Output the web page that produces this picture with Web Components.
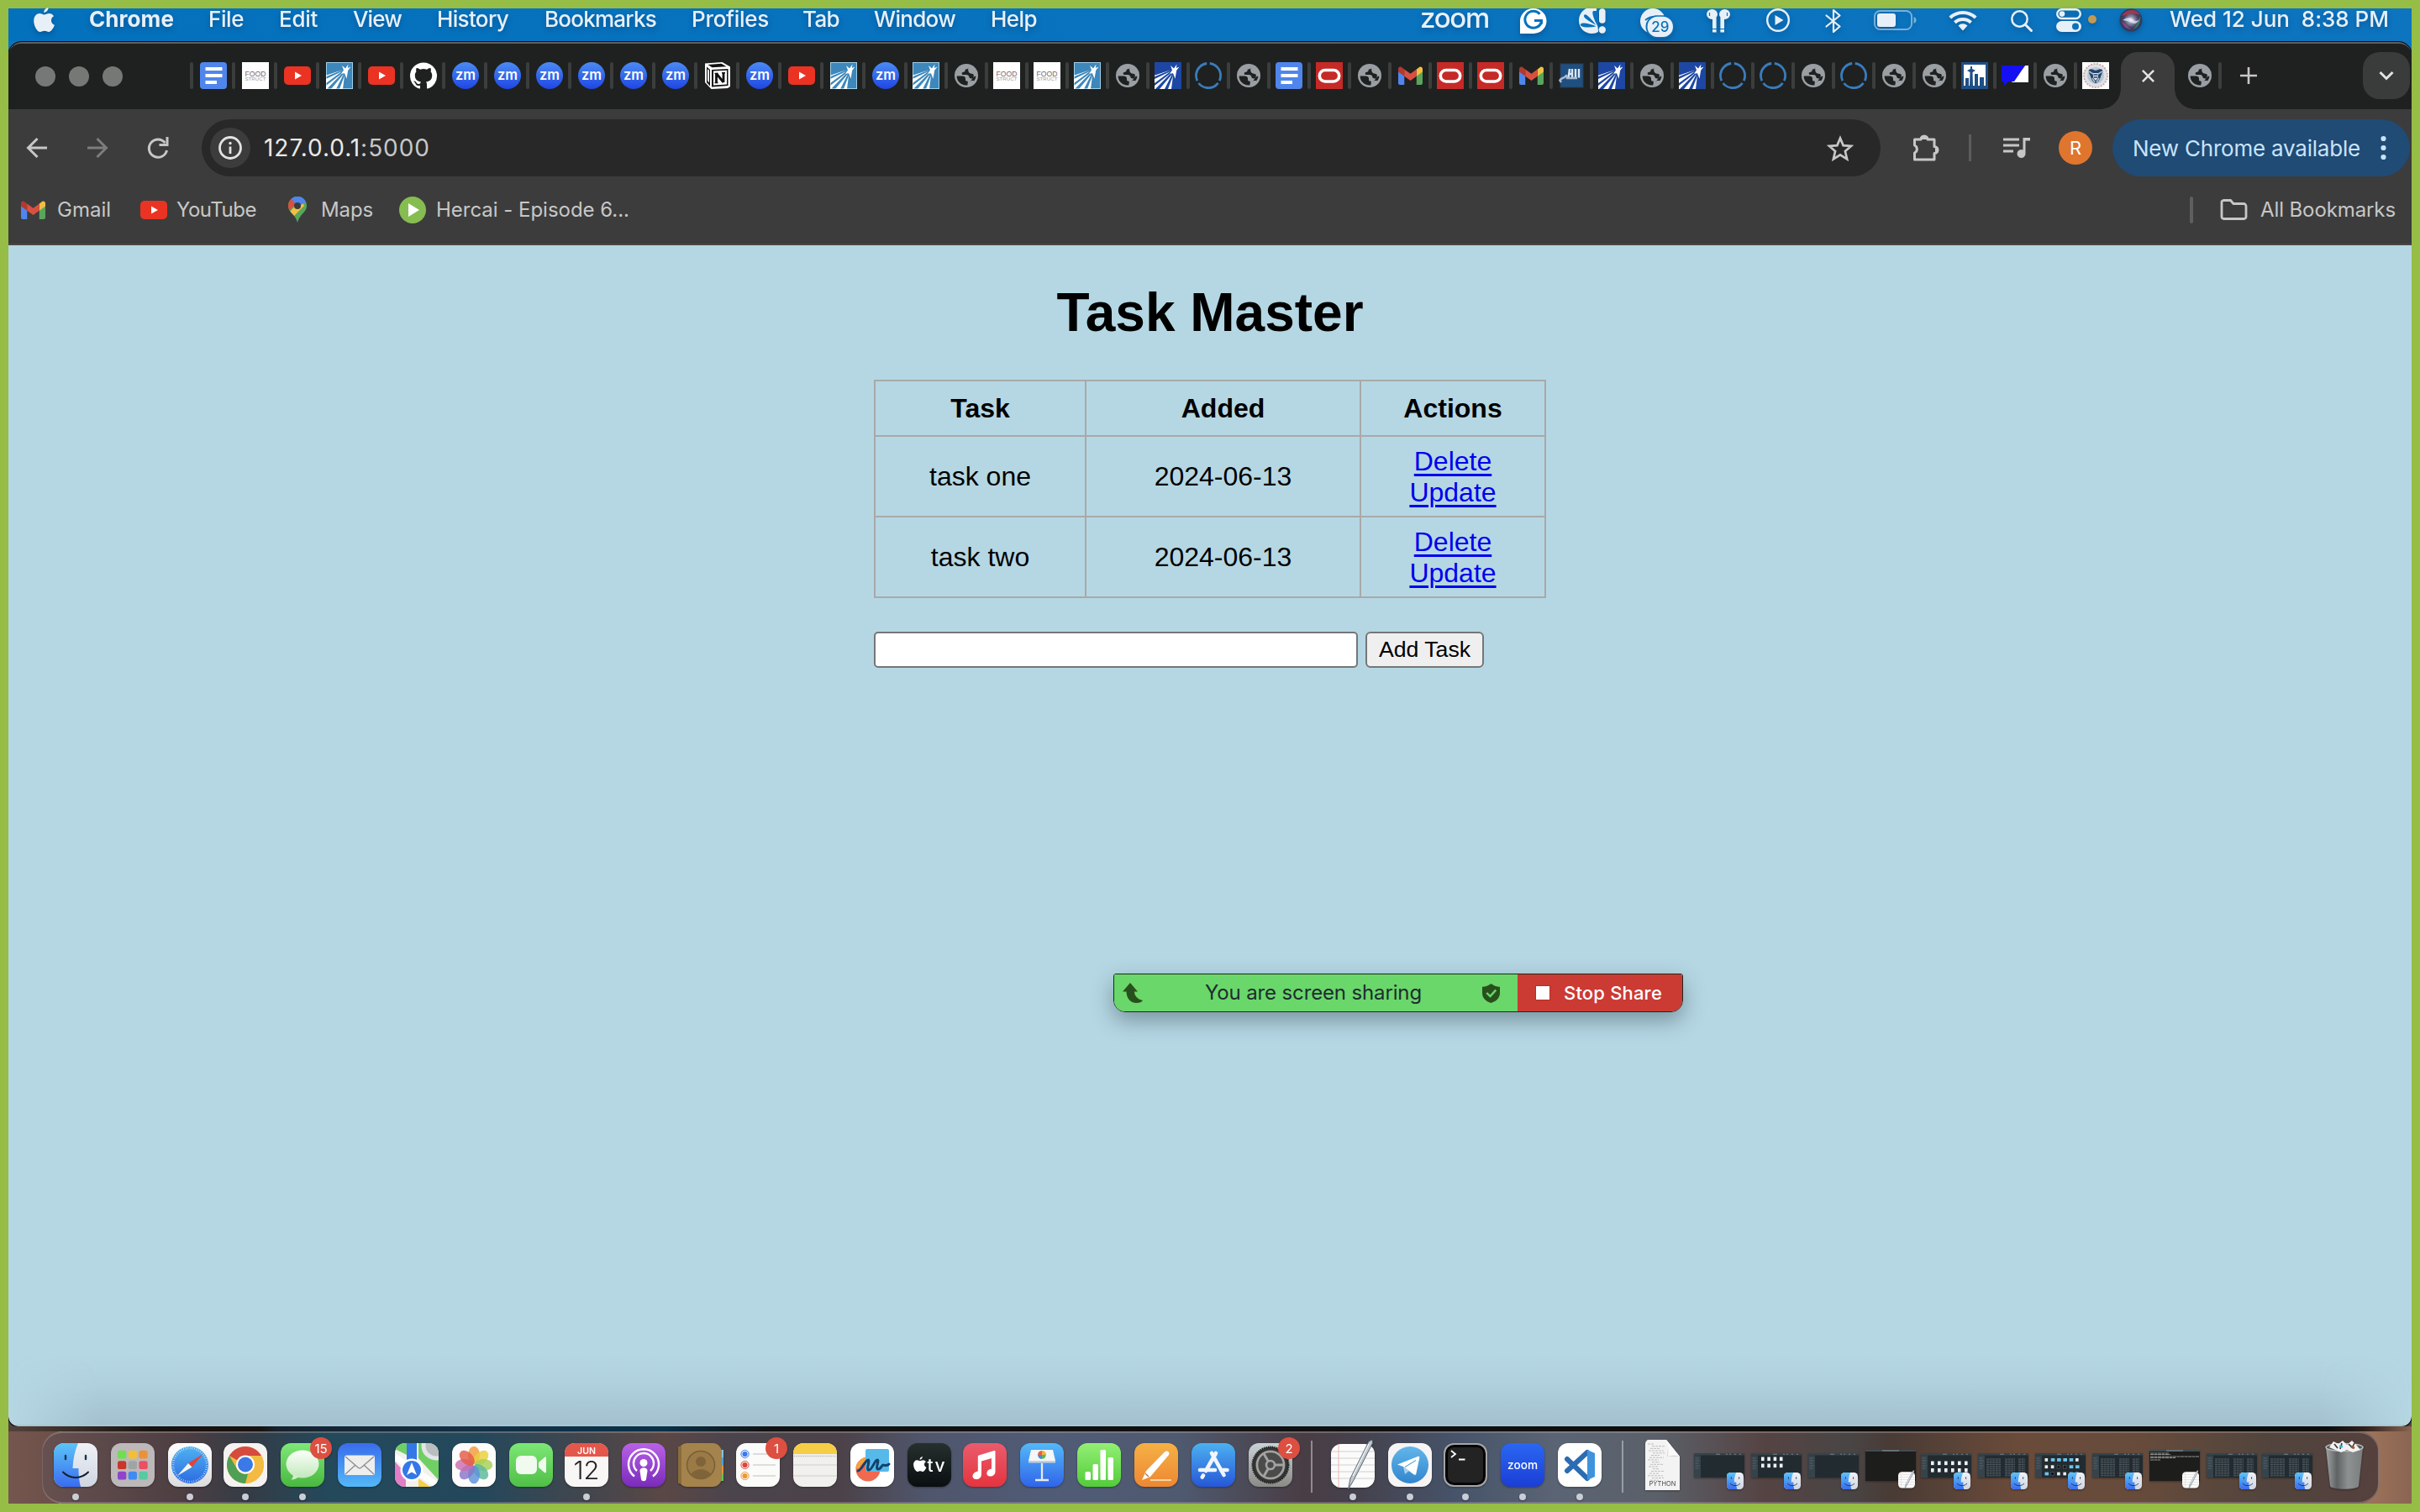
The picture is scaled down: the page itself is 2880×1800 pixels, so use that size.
<!DOCTYPE html>
<html lang="en">
<head>
<meta charset="utf-8">
<title>Task Master</title>
<style>
html,body{margin:0;padding:0;width:2880px;height:1800px;overflow:hidden;background:#96bd46;font-family:Inter,"Liberation Sans",sans-serif}
</style>
</head>
<body>
<desktop-screen></desktop-screen>
<script>
/* ---------- drawings ---------- */
const tile = (fill, inner, defs = '') => ['0 0 52 52', `<defs>${defs}</defs><rect width="52" height="52" rx="12" fill="${fill}"/>${inner}`];
const vgrad = (id, a, b) => `<linearGradient id="${id}" x1="0" y1="0" x2="0" y2="1"><stop stop-color="${a}"/><stop offset="1" stop-color="${b}"/></linearGradient>`;
const star = (bg, edge) => ['0 0 32 32', `<rect width="32" height="32" fill="${bg}"/><rect x=".5" y=".5" width="31" height="31" fill="none" stroke="${edge}"/>
<path fill="#fff" d="M26.500 2.500 25.800 7l3.700-1.500-3.300 4.300-1.700 10-2.500-6.500-4 .5 3-4.300-2-5.500 4 3.500zM20 9 0 17.300v-1.600zM19 11 0 25v-5zM20 12.500 1 32H0v-4zM21 14 12 32H6zM22 16l-2 16h-4z"/>`];
const FINDER = `<defs>${vgrad('a','#5cc4f7','#3a6cf0')}${vgrad('b','#eff1f6','#cfd6e2')}<clipPath id="c"><rect width="52" height="52" rx="12"/></clipPath></defs>
<g clip-path="url(#c)"><rect width="52" height="52" fill="url(#b)"/><path fill="url(#a)" d="M0 0h29c-4 9-6 19-6.500 30h7c0 8 .5 15 2.500 22H0z"/></g>
<path d="M14 15v4M38 15v4" stroke="#18344e" stroke-width="2.400" stroke-linecap="round"/><path d="M11 34.500c8 8.500 22 8.500 30 0" fill="none" stroke="#14202c" stroke-width="2" stroke-linecap="round"/>`;
const APPLE = `<path fill="currentColor" d="M17.500 0c.3 2.600-2.500 6-5.300 5.900C11.900 3.300 14.700.2 17.500 0zM24 10.200c-4.500 2.600-3.800 8.700.9 10.500-1.300 3.900-4.300 8.300-6.900 8.300-1.800 0-2.800-1.200-5-1.200S9.600 29 7.900 29C4.300 29 .2 21.800.2 15.900.2 10 3.700 7 7.200 7c2.200 0 4 1.400 5.400 1.400C13.900 8.400 16 7 18.700 7c2 0 4 1.100 5.300 3.200z"/>`;
const GMAIL = ['0 0 28 22', `<path fill="#5086ec" d="M0 3v17a2 2 0 0 0 2 2h5V9z"/><path fill="#58a55c" d="M28 3v17a2 2 0 0 1-2 2h-5V9z"/><path fill="#f1bf42" d="M21 3.500 24.500.8C26 0 28 1 28 3v3.500l-7 5.200z"/><path fill="#b03a2f" d="M7 3.500 3.500.8C2 0 0 1 0 3v3.500l7 5.200z"/><path fill="#d95040" d="M7 3.500v8.200l7 5.300 7-5.300V3.500l-7 5.300z"/>`];
const YT = ['0 0 32 22', `<rect width="32" height="22" rx="5" fill="#ea3323"/><path fill="#fff" d="m13 6.500 8 4.500-8 4.500z"/>`];
const windowThumb = kind => {
  let body = '';
  if (kind === 'files' || kind === 'files2') {
    for (let r = 0; r < 2; r++) for (let c = 0; c < (kind === 'files' ? 4 : 6); c++)
      body += `<rect x="${12 + c * (kind === 'files' ? 7.300 : 8)}" y="${kind === 'files' ? 4.500 + r * 8 : 9.500 + r * 8.500}" width="3.600" height="4.600" fill="#eef2f4"/>`;
  } else if (kind === 'folders') {
    const p = ['w','b','b','b','b','w','w','w','k','k','b','b','b','k','w','w','b','w'];
    p.forEach((k, i) => body += `<rect x="${11.500 + (i % 6) * 7.300}" y="${6 + Math.floor(i / 6) * 8.300}" width="${k === 'b' ? 4.600 : 3.600}" height="3.800" fill="${k === 'b' ? '#6cc3ee' : k === 'w' ? '#e8eef0' : '#11161a'}" stroke="#778086" stroke-width="${k === 'k' ? .4 : 0}"/>`);
  } else if (kind === 'list') {
    for (let i = 0; i < 10; i++) body += `<path d="M10 ${7 + i * 2.200}h17M32 ${7 + i * 2.200}h12M48 ${7 + i * 2.200}h8" stroke="#66727a" stroke-width=".8" stroke-dasharray="3 .6"/>`;
  }
  return ['0 0 60 29', `<rect width="60" height="29" fill="#222b30"/><rect width="60" height="2.500" fill="#37434a"/><path d="M26 1.200h5M38 1.200h2M42 1.200h2M48 1.200h2M54 1.200h2" stroke="#8a949a" stroke-width=".8"/><rect y="2.500" width="8" height="26.500" fill="#36434b"/><path d="M1.500 6h4M1.500 9h5M1.500 12h4M1.500 15h5M1.500 18h4" stroke="#5f6d75" stroke-width=".8"/>${body}`];
};
const ICONS = {
  apple: ['0 0 25 29', APPLE],
  grammarly: ['0 0 32 30', `<path fill="#fff" d="M16 0a15.500 15 0 1 1 0 30H0V14.500A15.800 15 0 0 1 16 0z"/><path d="M23.500 6.800a10 10 0 1 0 2 9.200" fill="none" stroke="#0a72bd" stroke-width="3"/><path d="M17 14.500h8.500v4" fill="none" stroke="#0a72bd" stroke-width="3"/>`],
  avast: ['0 0 32 30', `<path fill="#e8f0f7" d="M21 0H9C3.500 2.500 0 8 0 14.500c0 9 7 15.500 15.500 15.500 3 0 5.500-.8 7.500-2z"/><path fill="#0a72bd" d="M23 0v22c-2-3-5-9-6-13s-1-6 1-6 3 1 5-3zM20.500 20C15 17 8 13 6.500 10.500S7 6 9.500 8 17 15 20.500 20zM20.500 21.500C14 23 6 23 3 21s0-4 4-3.500 10 2 13.500 4z"/><path d="M27.800 4v10" stroke="#e8f0f7" stroke-width="7.600" stroke-linecap="round"/><circle cx="27.800" cy="25.500" r="4.200" fill="#e8f0f7"/>`],
  cloud: ['0 0 40 34', `<circle cx="16" cy="15" r="15" fill="#e8f0f7"/><path d="M7 14c5-4 11-5 18-3.500" stroke="#0a72bd" stroke-width="2" fill="none"/><rect x="7.500" y="8.200" width="34" height="27" rx="13.500" fill="#0a72bd"/><rect x="9.500" y="9.800" width="30.500" height="24.200" rx="12.100" fill="#e8f0f7"/><text x="24.800" y="28" text-anchor="middle" font-size="17" font-weight="500" font-family="Inter" fill="#0a72bd">29</text>`],
  airpods: ['0 0 28 28', `<g fill="#e8f0f7"><ellipse cx="6.500" cy="6" rx="6.500" ry="6"/><ellipse cx="21.500" cy="6" rx="6.500" ry="6"/><rect x="7" y="10" width="4.600" height="13"/><rect x="16.400" y="10" width="4.600" height="13"/><rect x="7" y="24" width="4.600" height="3.500"/><rect x="16.400" y="24" width="4.600" height="3.500"/></g><path d="M3.500 4v4M24.500 4v4" stroke="#0a72bd" stroke-width="1.200"/>`],
  play: ['0 0 28 28', `<circle cx="14" cy="14" r="12.800" fill="none" stroke="#e8f0f7" stroke-width="2.400"/><path fill="#e8f0f7" d="m10.500 8 10 6-10 6z"/>`],
  bluetooth: ['0 0 20 30', `<path d="m1.500 8.500 16 13L10 28V2l7.500 6.500-16 13" fill="none" stroke="#e8f0f7" stroke-width="2.200" stroke-linejoin="round" stroke-linecap="round"/>`],
  battery: ['0 0 51 24', `<rect x="1" y="1" width="44" height="22" rx="6.500" fill="none" stroke="#e8f0f7" stroke-opacity=".5" stroke-width="2"/><rect x="4" y="4" width="22" height="16" rx="3" fill="#e8f0f7"/><path d="M47.500 8c4 1.200 4 6.800 0 8z" fill="#e8f0f7" fill-opacity=".5"/>`],
  wifi: ['0 0 34 26', `<g fill="none" stroke="#e8f0f7" stroke-width="4"><path d="M1.800 10a22 22 0 0 1 30.400 0"/><path d="M7.400 15.800a14 14 0 0 1 19.200 0"/></g><path fill="#e8f0f7" d="M11.500 19.500a8 8 0 0 1 11 0L17 25.500z"/>`],
  search: ['0 0 26 26', `<circle cx="10.500" cy="10.500" r="9.200" fill="none" stroke="#e8f0f7" stroke-width="2.500"/><path d="m17.500 17.500 7 7" stroke="#e8f0f7" stroke-width="3" stroke-linecap="round"/>`],
  control: ['0 0 30 28', `<rect x="1.200" y="1.200" width="27.600" height="10.800" rx="5.400" fill="none" stroke="#e8f0f7" stroke-width="2.400"/><circle cx="7" cy="6.600" r="3.300" fill="#e8f0f7"/><rect y="15" width="30" height="13" rx="6.500" fill="#e8f0f7"/><circle cx="23" cy="21.500" r="4" fill="#0a72bd"/>`],
  siri: ['0 0 28 28', `<defs><radialGradient id="s"><stop stop-color="#fff"/><stop offset=".3" stop-color="#8d8fae"/><stop offset=".65" stop-color="#4a3f62"/><stop offset="1" stop-color="#2b3b58"/></radialGradient></defs><circle cx="14" cy="14" r="13.500" fill="url(#s)"/><path d="M3 9c4-8 18-10 22-1-7-3-15-1-22 1z" fill="#b03a4c" opacity=".8"/><path d="M25 9c1 7-2 13-8 16 4-5 6-10 8-16z" fill="#2f8b77" opacity=".8"/><path d="M3 15c2 6 6 9 11 10-4-3-7-6-11-10z" fill="#b14f98" opacity=".8"/><path d="M4 14c4-3 8-4 12-1s6 2 8 0c-2 5-6 6-9 4s-7-2-11-3z" fill="#dfe9f5" opacity=".75"/>`],

  docs: ['0 0 32 32', `<rect width="32" height="32" rx="4" fill="#5086ec"/><path fill="#fff" d="M6.500 6h20v4h-20zM6.500 14h20v4h-20zM6.500 22H20v4H6.500z"/>`],
  food: ['0 0 32 32', `<rect width="32" height="32" fill="#fff"/><g font-family="Liberation Sans" text-anchor="middle"><text x="16" y="17" font-size="9.500" textLength="25" lengthAdjust="spacingAndGlyphs" fill="#7d5f6a">FOOD</text><text x="16" y="22" font-size="6" textLength="25" lengthAdjust="spacingAndGlyphs" fill="#a0a0a0">STRUCT</text></g>`],
  youtube: YT,
  starlight: star('#3d87bb', '#9fd0ea'),
  stardark: star('#1d47a2', '#1d47a2'),
  github: ['0 0 32 32', `<path fill="#fff" d="M16 .4a16 16 0 0 0-5.060 31.180c.8.15 1.090-.35 1.090-.77v-2.980c-4.450.97-5.390-1.900-5.390-1.900-.73-1.850-1.780-2.340-1.780-2.340-1.450-.99.110-.97.110-.97 1.610.110 2.450 1.650 2.450 1.650 1.430 2.450 3.750 1.740 4.660 1.330.14-1.040.56-1.740 1.020-2.140-3.550-.41-7.290-1.780-7.290-7.910 0-1.750.62-3.180 1.650-4.290-.17-.41-.72-2.030.15-4.240 0 0 1.340-.43 4.400 1.640a15.300 15.300 0 0 1 8.010 0c3.050-2.070 4.390-1.640 4.390-1.640.87 2.210.33 3.830.16 4.240 1.030 1.110 1.650 2.540 1.650 4.290 0 6.150-3.750 7.500-7.310 7.900.57.500 1.090 1.470 1.090 2.960v4.390c0 .43.290.93 1.100.77A16 16 0 0 0 16 .4z"/>`],
  zm: ['0 0 32 32', `<defs>${vgrad('z','#4b8bf3','#1f46e4')}</defs><circle cx="16" cy="16" r="16" fill="url(#z)"/><text x="16" y="21" text-anchor="middle" font-family="Inter" font-weight="600" font-size="17" textLength="24" lengthAdjust="spacingAndGlyphs" fill="#fff">zm</text>`],
  notion: ['0 0 32 32', `<path fill="#fff" d="m1 1.500 20.500-1.500L31 5.500V29l-3 2-19.500 1L1 24z"/><path fill="#111" d="m4.500 3 16-1.200 6 3.500-17 1zM9 9l19.500-1V28L9 29.500z"/><path fill="#fff" d="m11 10.500 16-.8v16.800L11 27.500z"/><path d="M14.500 13.500v11M23 12.500v11.500M14.500 13.500 23 24" stroke="#111" stroke-width="2.800" fill="none"/><path d="M3 5.500 7 9v19.500L3 24z" fill="#111"/><path d="m4 8 2 2v14.500L4 22z" fill="#fff"/><path d="M12.500 13.500h4M21 12.800h4M12.500 24.500h4" stroke="#111" stroke-width="1.400"/>`],
  globe: ['0 0 32 32', `<circle cx="16" cy="16" r="14" fill="#9a9fa4"/><path fill="#1f2120" d="M4.600 16.500h6.400c2.500 0 4 1.200 4 3v1.500c0 1 .8 1.600 1.800 1.600.9 0 1.200.8 1 1.700l-.5 3.100C9.500 28 4.500 22.500 4.600 16.500zM18.500 4.700l-.3 2c-.2 1-1 1.600-2 1.600-1.200 0-1.700.8-1.700 1.800s-.7 1.600-1.800 1.600c-1.400 0-2 .8-2 1.800s.9 1.500 2 1.500h3.300c2.300 0 3 1.200 3.300 2.600.3 1.500 1.300 1.900 2.800 1.900 1.300 0 1.600-.7 2.300-1.600.8-1 2-1.300 3-1.200-.2 2-1 4-2.200 5.600-2.500-.5-4.500-.2-5.800 1.700 3-2.500 5.500-6.200 5.500-8.500-.7-2.300-3.500-1.300-5-2.500-1.700-1.300-2.200-4-1.400-8.300z"/>`],
  ring: ['0 0 32 32', `<circle cx="16" cy="16" r="14.600" fill="none" stroke="#3a7cbd" stroke-width="2.800" pathLength="100" stroke-dasharray="30 3.500 29 3.500 30 4" transform="rotate(-83 16 16)"/>`],
  oracle: ['0 0 32 32', `<rect width="32" height="32" fill="#c52a27"/><rect x="4.300" y="9.500" width="23.400" height="13.500" rx="6.700" fill="none" stroke="#fff" stroke-width="3.600"/>`],
  gmail: GMAIL,
  au: ['0 0 32 32', `<rect x="3" y="2" width="27" height="28" fill="#1f4f80" stroke="#2a3c55"/><path d="M12.500 19 14 8M17 19V8M21 8v10.500M25 8v10.500M13 14h4" stroke="#dbe7f2" stroke-width="2.400"/><path d="M2 22c2-4 6-3 7-5s2-1 2 2h12M2 21l2 3" stroke="#a9bdd2" stroke-width="2.400" fill="none"/>`],
  seattle: ['0 0 32 32', `<rect width="32" height="32" fill="#1f4f86"/><path fill="#fff" d="M3 3h26v25H3z"/><path fill="#1f4f86" d="M11 5h2v3l4 2-3.500 2L14 28h-4l.5-16L7 10l4-2zM5 19h4v9H5zM16 14h4v14h-4zM22 18h5v10h-5z"/>`],
  flag: ['0 0 32 32', `<path fill="#fff" d="M28 4h4v20H12z"/><path fill="#1410f2" d="M0 4h28L15 23H8l-5 5V23H0z"/>`],
  seal: ['0 0 32 32', `<rect width="32" height="32" fill="#fff"/><circle cx="16" cy="16" r="14" fill="#dfe2e6" stroke="#c9acac" stroke-dasharray="2 1.500" stroke-width="2"/><circle cx="16" cy="16" r="10" fill="#b9c6d0"/><path fill="#24406b" d="M8 9c3-2 5 0 8 1 3-1 5-3 8-1 1 3-1 5-2 8s-2 7-6 8c-4-1-5-5-6-8s-3-5-2-8z"/><path fill="#dfe6ec" d="M12.500 13h7l-1 6-2.500 3-2.500-3z"/><path d="M8 11l5 3M24 11l-5 3M12 19l3 5M20 19l-3 5" stroke="#a9bcc6" stroke-width="1.600"/><path d="M13.500 15h5M14 18h4" stroke="#24406b" stroke-width="1.400"/>`],
  close: ['0 0 18 18', `<path d="m2 2 14 14M16 2 2 16" stroke="#e3e3e3" stroke-width="2.600"/>`],
  plus: ['0 0 22 22', `<path d="M11 1v20M1 11h20" stroke="#c7c7c7" stroke-width="2.600"/>`],
  chevron: ['0 0 18 12', `<path d="m1.500 2 7.500 7.500L16.500 2" fill="none" stroke="#e3e3e3" stroke-width="3"/>`],

  back: ['0 0 26 26', `<path d="M25 13H3M13.500 2 2.500 13l11 11" fill="none" stroke="currentColor" stroke-width="3"/>`],
  forward: ['0 0 26 26', `<path d="M1 13h22M12.500 2l11 11-11 11" fill="none" stroke="currentColor" stroke-width="3"/>`],
  reload: ['0 0 26 26', `<path d="M21.500 7A10.700 10.700 0 1 0 23.500 16" fill="none" stroke="#c7c7c7" stroke-width="3"/><path fill="#c7c7c7" d="M25.500 0v11H14.500V8h8V0z"/>`],
  info: ['0 0 28 28', `<circle cx="14" cy="14" r="12.500" fill="none" stroke="#e3e3e3" stroke-width="2.800"/><path d="M14 12.500v8.500" stroke="#e3e3e3" stroke-width="2.800"/><circle cx="14" cy="8.500" r="1.700" fill="#e3e3e3"/>`],
  favorite: ['0 0 32 31', `<path d="m16 3.500 3.600 8.600 9.400.8-7.100 6.200 2.200 9.200L16 23.400l-8.100 4.900 2.200-9.200L3 12.900l9.400-.8z" fill="none" stroke="#c7c7c7" stroke-width="2.700"/>`],
  puzzle: ['0 0 33 33', `<path d="M3.500 7h7.500a4 4 0 0 1 8 0h8v8.500a4 4 0 0 1 0 8V31H3.500v-8a5 5 0 0 0 0-9z" fill="none" stroke="#c7c7c7" stroke-width="3" stroke-linejoin="round"/><path fill="#c7c7c7" d="M11 7a4 4 0 0 1 8 0zM28 15.500a4 4 0 0 1 0 8z"/>`],
  media: ['0 0 32 25', `<path d="M0 2h19M0 9h19M0 16h12" stroke="#c7c7c7" stroke-width="2.800"/><path fill="#c7c7c7" d="M23.500 0H32v3.500h-5.500V19a5 5 0 1 1-3-4.500z"/>`],
  dots: ['0 0 7 30', `<g fill="#c8e3fb"><circle cx="3.500" cy="4" r="3.100"/><circle cx="3.500" cy="15" r="3.100"/><circle cx="3.500" cy="26" r="3.100"/></g>`],
  maps: ['0 0 22 31', `<defs><clipPath id="p"><path d="M11 0a11 11 0 0 1 11 11c0 8-8 9-11 20C8 20 0 19 0 11A11 11 0 0 1 11 0z"/></clipPath></defs><g clip-path="url(#p)"><rect width="22" height="31" fill="#58a55c"/><path fill="#f1bf42" d="M0 20 16 3l3 8L5 25z"/><path fill="#4f86ec" d="M5 0h18v5L12 12z"/><path fill="#4f86ec" d="M2 3 11-2l12 6-14 6z"/><path fill="#d95040" d="M-1 3 3 2l6 7-9 9z"/></g><circle cx="11" cy="11" r="4" fill="#3c3c3c"/>`],
  hercai: ['0 0 32 32', `<circle cx="16" cy="16" r="16" fill="#86bd51"/><path fill="#fff" d="m11 8 13 8-13 8z"/>`],
  folder: ['0 0 33 25', `<path d="M4 1.500h8.500l3.500 4h12a3 3 0 0 1 3 3V21a2.500 2.500 0 0 1-2.500 2.500h-24A2.500 2.500 0 0 1 2 21V4a2.500 2.500 0 0 1 2-2.500z" fill="none" stroke="#c7c7c7" stroke-width="2.800"/>`],
  sharearrow: ['0 0 24 24', `<path fill="#28501c" d="M9 0 18 10.500h-4c0 5 3.500 9 10 10.500-1 2-4 3-7.500 3C9 24 4.500 18 4.500 10.500H0z"/>`],
  shield: ['0 0 20 23', `<path fill="#28501c" d="M10 0c3 2.500 6 3.500 10 3.800V11c0 6-4 10-10 12C4 21 0 17 0 11V3.800C4 3.500 7 2.500 10 0z"/><path d="m5 11 4 4 6.500-7.500" fill="none" stroke="#69d769" stroke-width="2.400"/>`],

  finder: ['0 0 52 52', FINDER],
  launchpad: tile('#bdb8b9', ['#6fdf4f','#f2bf3a','#ec9138','#c9362c','#9fa4a6','#ea4f63','#8f44cc','#3f8bf2','#57c9a3'].map((c, i) => `<rect x="${8 + (i % 3) * 12.700}" y="${8.800 + Math.floor(i / 3) * 12.500}" width="10.300" height="9.800" rx="2.600" fill="${c}"/>`).join('')),
  safari: tile('url(#w)', `<circle cx="26" cy="26" r="22" fill="url(#b)"/><circle cx="26" cy="26" r="20" fill="none" stroke="#fff" stroke-width="2.500" stroke-dasharray=".7 1.900" opacity=".75"/><path fill="#e44335" d="M41.500 13 24 24l4.500 4.500z"/><path fill="#f5f5f5" d="m11 39 13-15 4.500 4.500z"/>`, vgrad('b','#4fb2f1','#2c6be2') + vgrad('w','#fff','#dcdcdc')),
  chrome: tile('#f5f3f1', `<circle cx="26" cy="26" r="22" fill="#f3bb41"/><path fill="#d54b3d" d="M6.950 15A22 22 0 0 1 45.050 15H26a11 11 0 0 0-9.500 5.500z"/><path fill="#4f9f55" d="M6.950 15 16.500 31.500A11 11 0 0 0 29 36.600L26 48A22 22 0 0 1 6.950 15z"/><path fill="#f3bb41" d="M45.050 15H26a11 11 0 0 1 9.500 16.500L26 48a22 22 0 0 0 19.050-33z"/><circle cx="26" cy="25.500" r="11" fill="#fff"/><circle cx="26" cy="25.500" r="9" fill="#3b79e6"/>`),
  messages: tile('url(#g)', `<ellipse cx="26" cy="25" rx="19.500" ry="16.500" fill="url(#w)"/><path fill="#cfeec9" d="M15 37c0 3-1 5-2.500 6.500 4 0 7-1.500 9-4z"/>`, vgrad('g','#7fe878','#49b83f') + vgrad('w','#fbfffa','#c2e8bc')),
  mail: tile('url(#g)', `<rect x="8" y="14.500" width="36" height="23.500" rx="2.500" fill="#eee"/><path d="m9 16 15 13c1.500 1.200 2.500 1.200 4 0l15-13M9 37l12-11M43 37 31 26" fill="none" stroke="#8d8d8d" stroke-width="1.300"/>`, vgrad('g','#3a6cec','#54b8f8')),
  mapsapp: ['0 0 52 52', `<defs><clipPath id="m"><rect width="52" height="52" rx="12"/></clipPath></defs><g clip-path="url(#m)"><rect width="52" height="52" fill="#f3f1ec"/><path fill="#70cf64" d="M0 0h14v14L0 7zM28 0h24v44L28 18z"/><path fill="#e17ec5" d="M0 22l13 14v16H0z"/><path fill="#f6cf45" d="M28 52V42l14 10z"/><circle cx="49" cy="3" r="15" fill="#b9bec0" stroke="#e3e5e6" stroke-width="5"/><path fill="#3477e8" d="M14 0h12v24H14z"/><path d="M0 16 50 50" stroke="#fff" stroke-width="7"/><circle cx="20" cy="32" r="13.500" fill="#fff"/><circle cx="20" cy="32" r="11" fill="#3477e8"/><path fill="#fff" d="m20 23 6 15-6-3.500-6 3.500z"/></g>`],
  photos: tile('#fcfcfb', ['#f09b3c','#e9cf3b','#a5cf57','#5ab89c','#5a92d8','#8a74c9','#cb6cae','#e35c49'].map((c, i) => `<ellipse cx="26" cy="14.500" rx="7" ry="10.800" fill="${c}" opacity=".82" transform="rotate(${i * 45} 26 26)"/>`).join('')),
  facetime: tile('url(#g)', `<rect x="8" y="15" width="25" height="22" rx="6" fill="#f0faef"/><path fill="#f0faef" d="m35 23 7-6c1-.8 2-.3 2 1v16c0 1.300-1 1.800-2 1l-7-6z"/>`, vgrad('g','#7ce775','#50bf47')),
  calendar: tile('#f8f7f5', `<path fill="#e4574b" d="M0 16v-4A12 12 0 0 1 12 0h28a12 12 0 0 1 12 12v4z"/><g text-anchor="middle" font-family="Inter"><text x="26" y="12.500" font-size="10.500" font-weight="600" fill="#fff">JUN</text><text x="26" y="43" font-size="30" font-weight="300" textLength="31" lengthAdjust="spacingAndGlyphs" fill="#222">12</text></g>`),
  podcasts: tile('url(#g)', `<g fill="none" stroke="#fff" stroke-width="2.400"><path d="M15 39.500a18 18 0 1 1 22 0"/><path d="M18 33a12 12 0 1 1 16 0"/></g><circle cx="26" cy="23.500" r="4.500" fill="#fff"/><path fill="#fff" d="M21.500 33c0-5 9-5 9 0l-1.500 10c-.5 3-5.500 3-6 0z"/>`, vgrad('g','#b862e6','#7a2bbb')),
  contacts: ['0 0 54 52', `<path fill="#7ec6e6" d="M49 8h5v9h-5z"/><path fill="#4da0dd" d="M49 17h5v10h-5z"/><path fill="#e8923a" d="M49 27h5v9h-5z"/><path fill="#63c257" d="M49 36h5v9h-5z"/><rect width="52" height="52" rx="11" fill="#a5834c"/><rect width="4" height="44" y="4" fill="#8a6c3b"/><circle cx="27" cy="26" r="16.500" fill="#9b7a45" stroke="#7a6038" stroke-width="1.600"/><circle cx="27" cy="22" r="6" fill="#7f643a"/><path fill="#7f643a" d="M15 38c3-9 21-9 24 0-6 6-18 6-24 0z"/>`],
  reminders: tile('#fbfbfa', ['#3a79ee','#dd453a','#ec9836'].map((c, i) => `<circle cx="10.500" cy="${13 + i * 13}" r="4.600" fill="none" stroke="${c}" stroke-width="1"/><circle cx="10.500" cy="${13 + i * 13}" r="3.100" fill="${c}"/><path d="M20 ${13 + i * 13}h27" stroke="#c9c9c9" stroke-width="1.200"/>`).join('')),
  notes: tile('#f1f0ee', `<path fill="#f6cd46" d="M0 13v-1A12 12 0 0 1 12 0h28a12 12 0 0 1 12 12v1z"/><path d="M1 15.500h50" stroke="#b5b2ad" stroke-width="1.500" stroke-dasharray="1 1.200"/><path d="M0 26h52M0 39h52" stroke="#cfcdca" stroke-width="1"/>`),
  freeform: tile('#fff', `<circle cx="21" cy="31" r="14.500" fill="#ef6a50"/><path d="M8.500 30a13 13 0 0 1 11-11" stroke="#f3a042" stroke-width="5" fill="none"/><rect x="18" y="7" width="28" height="27" rx="2" fill="#56b9ea"/><path d="M9 33c4 0 9-13 12-13s-3 12 1 12 7-12 10-12-3 11 1 11 4-5 6-5 3 2 7-1" fill="none" stroke="#12426c" stroke-width="3" stroke-linecap="round"/>`),
  tv: tile('url(#g)', `<g color="#fff" transform="translate(7 16) scale(.62)">${APPLE}</g><text x="23.500" y="33.500" font-size="21" font-family="Inter" font-weight="500" fill="#fff" textLength="21">tv</text>`, vgrad('g','#26302e','#0a0e10')),
  music: tile('url(#g)', `<path fill="#fff" d="M19 14.500 37 9c1-.3 1.500.2 1.500 1v24c0 3.500-3 5.500-6 5.500-6 0-5.500-8 1.500-9V18l-12 3.500V37c0 4-3 6-6 6-6.500 0-6-8.500 1.800-9.500V16.500c0-1.200.2-1.700 1.200-2z"/>`, vgrad('g','#ea5c6d','#e4343f')),
  keynote: tile('url(#g)', `<path fill="#f4f6f8" d="m13 8h26l3 13H10z"/><path fill="#c8ced6" d="M10 21h32v2.500H10z"/><path d="M26 24v19M18 44h16" stroke="#e6eaf0" stroke-width="2.300"/><circle cx="26" cy="14" r="4.800" fill="#58b85a"/><path fill="#ec5c4a" d="M26 14V9.200A4.800 4.800 0 0 0 21.200 14z"/><path fill="#4b86ea" d="M26 14h-4.800a4.800 4.800 0 0 0 4.800 4.800z"/><path fill="#f0b43c" d="M26 14h4.800A4.800 4.800 0 0 0 26 9.200z"/>`, vgrad('g','#53b9f8','#3064ea')),
  numbers: tile('url(#g)', `<g fill="#fff"><rect x="9.500" y="34" width="6.500" height="10" rx="1.500"/><rect x="18.500" y="25" width="6.500" height="19" rx="1.500"/><rect x="27.500" y="8" width="6.500" height="36" rx="1.500"/><rect x="36.500" y="17" width="6.500" height="27" rx="1.500"/></g>`, vgrad('g','#93ef74','#52cc3a')),
  pages: tile('url(#g)', `<path d="M9 44 14 33 36 10.500c2.500-2.500 6.500 0 5 3.500L19 40z" fill="#fff"/><path d="m13 36 4 4" stroke="#b08040" stroke-width="1.500"/><path d="M19 44h25" stroke="#f9d5a0" stroke-width="2"/>`, vgrad('g','#f5b145','#ee8733')),
  appstore: tile('url(#g)', `<g fill="none" stroke="#f1f6fc" stroke-width="4.600" stroke-linecap="round"><path d="m24 12 14.500 26M29 12 17 33M10 32h18M35 32h7.500M14 38.500l-1.300 2"/></g>`, vgrad('g','#4cb1f0','#2657d8')),
  settings: tile('url(#g)', `<circle cx="26" cy="26" r="21.500" fill="#333" stroke="#222" stroke-width="2" stroke-dasharray="1.500 1"/><circle cx="26" cy="26" r="18" fill="#4b4b4a"/><circle cx="26" cy="26" r="16" fill="none" stroke="#a2a3a2" stroke-width="2.600"/><circle cx="26" cy="26" r="5" fill="none" stroke="#a2a3a2" stroke-width="2.600"/><path d="M31 26h11M23.500 22 18 12.500M23.500 30 18 39.500" stroke="#a2a3a2" stroke-width="3"/>`, vgrad('g','#c8d2d6','#8b8a86')),
  textedit: ['0 -6 52 62', `<rect width="52" height="52" rx="12" fill="#fbfbfb"/><path d="M0 9h52M0 17h52M0 25h52M0 33h52M0 41h52" stroke="#cfcfcf" stroke-width="1.200"/><path d="M9 0v52" stroke="#f0b7b5" stroke-width="1"/><path fill="#c0c8ce" stroke="#596471" stroke-width="1" d="M45-3 49-5l.5 4L27 43l-6.500 11L23 41z"/><path d="M45 0 26 38" stroke="#f4f6f8" stroke-width="1.300"/>`],
  telegram: tile('#f6f4f4', `<circle cx="26" cy="26" r="22" fill="url(#g)"/><path fill="#fff" d="M11 25.500 35 16c2-.8 2.500.3 2.300 1.500l-4 19c-.3 1.500-1.500 1.700-2.600.9L18 28z"/><path fill="#a8cfe9" d="m18 28 2 9 5-4z"/><path d="m20 28.500 13-8" stroke="#2f8fd0" stroke-width="1"/>`, vgrad('g','#62b6ea','#3285cd')),
  terminal: tile('#a5a5a6', `<rect x="2" y="2" width="48" height="48" rx="10.500" fill="#050505"/><rect x="5" y="5" width="42" height="42" rx="7" fill="#232323"/><path d="m9 9 5 4-5 4M18 19.500h7.500" stroke="#fff" stroke-width="1.800" fill="none"/>`),
  zoomapp: tile('url(#g)', `<text x="26" y="30.500" text-anchor="middle" font-family="Inter" font-weight="500" font-size="14.500" textLength="36" lengthAdjust="spacingAndGlyphs" fill="#fff">zoom</text>`, vgrad('g','#2a67f2','#1b3ed6')),
  vscode: tile('#fff', `<path d="M11 33 35 11M11 19l24 23" stroke="#2b6cb3" stroke-width="6" stroke-linecap="round" fill="none"/><path fill="#3f93dd" d="m35 8 9 4v28l-9 4z"/>`),
  python: ['0 0 41 60', `<path fill="#f3f3f3" d="M0 5c0-3 2-5 4-5h21l16 20v40H0z"/><path fill="#d5d5d5" d="M25 0c3 6 2 13 1 20h15z"/><path fill="#fafafa" d="m25 0 16 20c-5-2-10-1-14 0 1-7 0-13-2-20z"/>${Array.from({length: 17}, (_, i) => `<path d="M${3 + (i * 5) % 7} ${5 + i * 2.700}h${8 + (i * 7) % 11}" stroke="#b9b9b9" stroke-width=".9" stroke-dasharray="3 1"/>`).join('')}<text x="20.500" y="55" text-anchor="middle" font-family="Inter" font-size="8" textLength="32" lengthAdjust="spacingAndGlyphs" fill="#4c4c4c">PYTHON</text>`],
  trash: ['0 0 46 60', `<defs><linearGradient id="t"><stop stop-color="#a0a3a3"/><stop offset=".3" stop-color="#5f6364"/><stop offset=".6" stop-color="#8d9191"/><stop offset="1" stop-color="#7a7d7d"/></linearGradient></defs><path fill="url(#t)" d="M1 9h44l-5 46c-1 5-33 5-34 0z"/><ellipse cx="23" cy="9" rx="22" ry="4.500" fill="#555" stroke="#b9bcbc" stroke-width="1.600"/><path fill="#f2f2f2" d="m5 9 5-7 6 3 5-4 5 5 6-5 6 6 4 5-9 3-7-3-7 3z"/><path d="m11 5 4 5M20 4l-2 7M28 5l5 5M35 4l-3 6" stroke="#333" stroke-width="1.600"/><path d="M17 8h4" stroke="#3cb5d8" stroke-width="2.600"/><path d="m31 8 4 2" stroke="#a5522d" stroke-width="2.600"/>`],
  'w-plain': windowThumb('plain'), 'w-files': windowThumb('files'), 'w-files2': windowThumb('files2'), 'w-folders': windowThumb('folders'), 'w-list': windowThumb('list'),
  'w-dark': ['0 0 60 37', `<rect width="60" height="37" fill="#1d1d1c"/><rect width="60" height="2" fill="#414d52"/><path d="M20 1h20" stroke="#a9b2b5" stroke-width=".7"/>`],
  'w-text': ['0 0 60 37', `<rect width="60" height="37" fill="#1d1d1c"/><rect width="60" height="2" fill="#414d52"/><path d="M20 1h20" stroke="#a9b2b5" stroke-width=".7"/><path d="M1 4h22M1 5.500h24M1 8h58M1 9.500h30M1 12h12" stroke="#b5b5b5" stroke-width=".8" stroke-dasharray="4 .5"/>`]
};

/* ---------- building blocks ---------- */
const define = (name, html, init) => customElements.define(name, class extends HTMLElement {
  connectedCallback() {
    if (this.shadowRoot) return;
    const root = this.attachShadow({ mode: 'open' });
    root.innerHTML = typeof html === 'function' ? html(this) : html;
    if (init) init(this, root);
  }
});

define('ui-icon', el => {
  const [box, art] = ICONS[el.getAttribute('name')];
  return `<style>:host{display:block;flex:none;width:${el.getAttribute('w')}px;height:${el.getAttribute('h')}px}svg{display:block;width:100%;height:100%;overflow:visible}</style><svg viewBox="${box}" preserveAspectRatio="none">${art}</svg>`;
});

/* One line of text whose tracking is tuned to fill the given width. */
define('fit-text', el => `<style>:host{display:block;flex:none;white-space:pre;width:${el.getAttribute('w')}px}span{display:inline-block}</style><span><slot></slot></span>`, (el, root) => {
  const span = root.querySelector('span');
  const n = el.textContent.length;
  const natural = span.getBoundingClientRect().width;
  span.style.letterSpacing = ((+el.getAttribute('w') + 1 - natural) / n) + 'px';
});

const ic = (name, gap, w, h, style = '') => `<ui-icon name="${name}" w="${w}" h="${h}" style="margin-left:${gap}px;${style}"></ui-icon>`;
const tx = (t, gap, w, style = '') => `<fit-text w="${w}" style="margin-left:${gap}px;${style}">${t}</fit-text>`;

define('menu-bar', () => `<style>
:host{display:block;height:39px;background:linear-gradient(90deg,#0471bd,#0d74bf);color:#e8f0f7;font-size:26px;font-weight:500}
.row{display:flex;align-items:center;height:26px;filter:drop-shadow(0 3px 3px rgba(0,30,70,.3))}
fit-text{line-height:26px;margin-top:-1px}
.dot{width:10px;height:10px;border-radius:50%;background:#c29a53;margin-left:8px}
</style><div class="row">
${ic('apple', 30, 25, 29, 'margin-top:1px')}${tx('Chrome', 41, 100, 'font-weight:700')}
${[['File',42,41],['Edit',43,45],['View',43,57],['History',43,84],['Bookmarks',44,132],['Profiles',43,91],['Tab',41,43],['Window',42,96],['Help',43,54]].map(a => tx(...a)).join('')}
${tx('zoom', 457, 81, 'font-size:33px;font-weight:500;margin-top:-4px')}${ic('grammarly', 38, 32, 30, 'margin-top:4px')}${ic('avast', 38, 32, 30, 'margin-top:4px')}
${ic('cloud', 40, 40, 34, 'margin-top:8px')}${ic('airpods', 40, 28, 28, 'margin-top:3px')}${ic('play', 43, 28, 28, 'margin-top:2px')}${ic('bluetooth', 42, 20, 30, 'margin-top:3px')}${ic('battery', 38, 51, 24, 'margin-top:2px')}${ic('wifi', 38, 34, 26, 'margin-top:2px')}${ic('search', 40, 26, 26, 'margin-top:3px')}${ic('control', 28, 30, 28, 'margin-top:2px')}<div class="dot"></div>${ic('siri', 27, 28, 28, 'margin-top:2px')}${tx('Wed 12 Jun&nbsp; 8:38 PM', 32, 260)}
</div>`);

const TABS = ('docs food youtube starlight youtube github zm zm zm zm zm zm notion zm youtube starlight zm ' +
 'starlight globe food food starlight globe stardark ring globe docs oracle globe gmail oracle oracle gmail au stardark globe stardark ring ring globe ring globe globe seattle flag globe seal').split(' ');

define('tab-strip', () => `<style>
:host{display:flex;height:78px;background:#1f2120;align-items:center}
.light{width:24px;height:24px;border-radius:50%;background:#767876;margin-right:16px}
.tab{display:flex;align-items:center;justify-content:center;margin-top:-2px}
.tab::before{content:"";width:4px;height:32px;border-radius:2px;background:#3c3d3d;margin-right:auto;margin-left:-2px}
.tab ui-icon{margin-right:auto}
.narrow ui-icon{transform:translateX(-1px)}
.active{width:64px;height:68px;align-self:flex-end;background:#3c3c3c;border-radius:20px 20px 0 0;display:flex;justify-content:center;align-items:center;position:relative;margin-left:6px}
.active::before,.active::after{content:"";position:absolute;bottom:0;width:24px;height:24px}
.active::before{left:-24px;background:radial-gradient(circle at 0 0,transparent 23.500px,#3c3c3c 24px)}
.active::after{right:-24px;background:radial-gradient(circle at 100% 0,transparent 23.500px,#3c3c3c 24px)}
.sep{width:4px;height:32px;border-radius:2px;background:#3c3d3d}
.menu{width:56px;height:56px;border-radius:20px;background:#3a3b3b;display:flex;align-items:center;justify-content:center;margin-left:125px;margin-top:-2px}
</style><div style="width:32px"></div><div class="light"></div><div class="light"></div><div class="light"></div><div style="width:66px"></div>
${TABS.map((n, i) => `<div class="tab${i < 17 ? '' : ' narrow'}" style="width:${i < 17 ? 50 : 48}px">${n === 'youtube' ? ic(n,0,32,22) : n === 'gmail' ? ic(n,0,29,22) : ic(n,0,32,32)}</div>`).join('')}
<div class="active">${ic('close',0,17,17,'margin-top:-12px')}</div>
${ic('globe',14,32,32,'margin-top:-2px')}<div class="sep" style="margin-left:6px;margin-top:-2px"></div>${ic('plus',21,22,22,'margin-top:-2px')}<div class="menu">${ic('chevron',0,18,12)}</div>`);

define('tool-bar', () => `<style>
:host{display:flex;align-items:center;height:92px;color:#c7c7c7}
.url{display:flex;align-items:center;box-sizing:border-box;width:1998px;height:68px;border-radius:34px;background:#282828;margin-left:39px;padding:0 32px 0 10px;font-size:28px;color:#c7c7c7}
.chip{width:48px;height:48px;border-radius:50%;background:#3c3c3c;display:flex;align-items:center;justify-content:center}
b{font-weight:400;color:#e9e9e9}
.sep{width:3px;height:32px;background:#5d5d5d;margin-left:35px}
.avatar{width:40px;height:40px;border-radius:50%;background:#e0752d;margin-left:34px;display:flex;align-items:center;justify-content:center;color:#fff;font-size:22px}
.update{display:flex;align-items:center;box-sizing:border-box;width:354px;height:68px;border-radius:34px;background:#1f4b75;margin-left:24px;padding-left:24px;color:#c8e3fb;font-size:26px}
</style>
${ic('back',21,26,26,'color:#c7c7c7')}${ic('forward',46,26,26,'color:#7d7d7d')}${ic('reload',46,26,26)}
<div class="url"><div class="chip">${ic('info',0,28,28)}</div>${tx('<b>127.0.0.1</b>:5000', 16, 197)}<div style="flex:1"></div>${ic('favorite',0,32,31)}</div>
${ic('puzzle',37,33,33,'margin-top:-2px')}<div class="sep"></div>${ic('media',38,32,25)}<div class="avatar">R</div>
<div class="update">${tx('New Chrome available',0,270)}${ic('dots',25,7,30)}</div>`);

define('bookmarks-bar', () => `<style>
:host{display:flex;align-items:center;height:55px;padding-bottom:13px;color:#c7c7c7;font-size:24px}
.sep{width:4px;height:32px;border-radius:2px;background:#5f5f5f;margin-left:auto}
</style>
${ic('gmail',15,29,22)}${tx('Gmail',14,63)}${ic('youtube',36,32,22)}${tx('YouTube',11,94)}${ic('maps',39,22,31)}${tx('Maps',17,61)}${ic('hercai',32,32,32)}${tx('Hercai - Episode 6...',12,229)}
<div class="sep"></div>${ic('folder',32,33,25)}${tx('All Bookmarks',15,160,'margin-right:20px')}`);

define('task-page', () => `<style>
:host{display:block;box-sizing:border-box;background:linear-gradient(#b5d7e3 0 calc(100% - 2px),#a9c5d4 0);height:1406px;border-radius:0 0 12px 12px;font-family:"Liberation Sans",Arial,sans-serif;color:#000;overflow:hidden;font-size:32px;position:relative}
:host::after{content:"";position:absolute;left:0;right:0;bottom:2px;height:84px;background:linear-gradient(rgba(120,140,155,0),rgba(120,140,155,.08) 40%,rgba(110,130,145,.26));-webkit-mask-image:linear-gradient(90deg,transparent,#000 110px,#000 calc(100% - 110px),transparent)}
main{width:800px;margin:0 auto}
h1{font-size:64px;line-height:74px;margin:0;padding:43px 0;text-align:center;font-weight:700}
table{width:800px;border-collapse:collapse;table-layout:fixed;border:2px solid #a9a9a9}
th,td{border:2px solid #a9a9a9;padding:0;text-align:center;line-height:37px}
th{height:64px}td{height:94px}
.links{padding-top:1px;height:93px}
a{color:#0000ee;text-decoration:underline;text-decoration-thickness:3px;text-underline-offset:4px;display:block;width:max-content;margin:0 auto}
form{display:flex;gap:9px;margin-top:40px}
input{box-sizing:border-box;width:576px;height:43px;border:2px solid #767676;border-radius:5px;background:#fff;padding:0;margin:0}
button{box-sizing:border-box;width:141px;height:43px;border:2px solid #767676;border-radius:6px;background:#efefef;font:26.670px "Liberation Sans",Arial,sans-serif;padding:0;margin:0;color:#000;white-space:nowrap}
</style><main><h1>Task Master</h1>
<table><colgroup><col style="width:251px"><col style="width:327px"><col style="width:220px"></colgroup>
<tr><th>Task</th><th>Added</th><th>Actions</th></tr>
<tr><td>task one</td><td>2024-06-13</td><td class="links"><a>Delete</a><a>Update</a></td></tr>
<tr><td>task two</td><td>2024-06-13</td><td class="links"><a>Delete</a><a>Update</a></td></tr></table>
<form><input type="text"><button type="button">Add Task</button></form></main>`);

define('share-bar', `<style>
:host{position:absolute;left:1325px;top:1159px;display:flex;box-sizing:border-box;width:678px;height:46px;border:1.500px solid #1c2a1c;border-radius:3px 3px 14px 14px;overflow:hidden;box-shadow:0 10px 26px rgba(30,50,60,.4);font-size:24px;color:#1f2b30}
.go{display:flex;align-items:center;width:480px;background:#69d769}
.stop{display:flex;align-items:center;flex:1;background:#cb3a33;color:#fff;font-size:22px;font-weight:500}
.sq{width:16px;height:16px;background:#fff;margin-left:22px;outline:1px solid #b52f2a}
fit-text{margin-top:-1px}
</style><div class="go">${ic('sharearrow',10,24,24)}${tx('You are screen sharing',74,257)}${ic('shield',73,21,23)}</div><div class="stop"><div class="sq"></div>${tx('Stop Share',17,116)}</div>`);

/* name, centre distance from the previous item, extras */
const DOCK = [
 ['finder',90,{d:1}],['launchpad',68],['safari',68,{d:1}],['chrome',66,{d:1}],['messages',68,{d:1,b:'15'}],['mail',68],['mapsapp',68],['photos',68],['facetime',68],['calendar',66,{d:1}],['podcasts',68],['contacts',68,{w:54}],['reminders',68,{b:'1'}],['notes',68],['freeform',68],['tv',68],['music',66],['keynote',68],['numbers',68],['pages',68],['appstore',68],['settings',68,{b:'2'}],
 ['|',49],['textedit',49,{d:1,h:62}],['telegram',68,{d:1}],['terminal',66,{d:1}],['zoomapp',68,{d:1}],['vscode',68,{d:1}],['|',51],['python',47,{w:41,h:60}],
 ['w-plain',68,{m:'finder'}],['w-files',68,{m:'finder'}],['w-plain',68,{m:'finder'}],['w-dark',68,{m:'textedit'}],['w-files2',66,{m:'finder'}],['w-list',68,{m:'finder'}],['w-folders',68,{m:'finder'}],['w-list',68,{m:'finder'}],['w-text',68,{m:'textedit'}],['w-list',68,{m:'finder'}],['w-list',66,{m:'finder'}],['trash',68,{w:46,h:60}]
];
define('dock-item', el => {
  const n = el.getAttribute('name'), g = a => el.getAttribute(a);
  const thumb = n.startsWith('w-'), tall = n === 'w-dark' || n === 'w-text';
  const w = thumb ? 60 : +(g('w') || 52), h = thumb ? (tall ? 37 : 29) : +(g('h') || 52);
  const shift = n === 'python' || n === 'trash' ? 'margin-top:-1px' : '';
  return `<style>:host{display:flex;flex:none;flex-direction:column;align-items:center;justify-content:center;width:${w}px;height:80px;position:relative;filter:drop-shadow(0 1px 1px rgba(0,0,0,.35))}
.dot{position:absolute;bottom:-2px;left:50%;margin-left:-4px;width:8px;height:8px;border-radius:50%;background:#c9cdd6}
.badge{position:absolute;top:7px;right:-9px;width:26px;height:26px;border-radius:50%;background:#dd4f41;color:#fff;font-size:15px;display:flex;align-items:center;justify-content:center}
.mini{position:absolute;right:1px;bottom:11px}</style>${ic(n,0,w,h, shift)}${g('d') ? '<div class="dot"></div>' : ''}${g('b') ? `<div class="badge">${g('b')}</div>` : ''}${g('m') ? `<div class="mini">${ic(g('m'),0,20,g('m') === 'textedit' ? 23 : 20)}</div>` : ''}`;
});
define('app-dock', () => {
  let prev = 51, at = 0;
  const items = DOCK.map(([n, step, o = {}]) => {
    const w = n === '|' ? 2 : n.startsWith('w-') ? 60 : o.w || 52;
    at += step;
    const gap = at - w / 2 - prev;
    prev = at + w / 2;
    return n === '|' ? `<div class="sep" style="margin-left:${gap}px"></div>` : `<dock-item name="${n}" ${Object.entries(o).map(([k, v]) => `${k}="${v}"`).join(' ')} style="margin-left:${gap}px"></dock-item>`;
  }).join('');
  return `<style>:host{display:block;height:92px;flex:none;overflow:hidden;background:
linear-gradient(90deg,#75564f 0,#6b5048 60px,transparent 60px,transparent 2800px,#a0755c 2800px,#8a6552 2860px)}
.behind{height:6px;background:linear-gradient(90deg,#54423b 0,#17120f 170px,#181110 300px,#15222e 320px,#123045 560px,#0a3046 780px,#111 900px,#0c0c0c 2760px,#30211b 2805px,#8a6552 2860px)}
.dock{box-sizing:border-box;width:2781px;height:86px;margin-left:40px;border:2px solid rgba(180,165,165,.38);border-left-width:1px;border-right-width:1px;border-radius:24px;display:flex;align-items:center;padding-bottom:6px;background:linear-gradient(90deg,#67504f 0,#4c3e42 170px,#343c46 245px,#23495b 340px,#24485b 520px,#41464e 640px,#5a4746 740px,#4b444c 820px,#4c4249 950px,#4f566c 1050px,#505b76 1200px,#4f5a70 1350px,#493d44 1500px,#45414c 1560px,#465369 1680px,#5a6474 1800px,#5b6069 1920px,#554343 2050px,#494545 2150px,#493b35 2200px,#6a4b3a 2350px,#664b3b 2500px,#51443d 2650px,#55403d 2781px)}
.sep{width:2px;height:62px;background:rgba(215,215,220,.5);flex:none;margin-top:4px}</style>
<div class="behind"></div><div class="dock">${items}</div>`;
});

define('desktop-screen', `<style>
:host{display:block;box-sizing:border-box;width:2880px;height:1800px;padding:10px;background:#96bd46;position:relative}
.screen{height:1780px;display:flex;flex-direction:column}
.window{border-radius:16px 16px 12px 12px;overflow:hidden;background:#3c3c3c;border-top:2px solid #5f6060;box-shadow:0 0 0 1px #0b0b0b;margin-top:1px;flex:none}
.rest{background:linear-gradient(#0b74bf 0 50%,#54423b 50%);flex:none;clip-path:inset(0)}
.edge{height:2px;background:#4b4646}
</style><div class="screen"><menu-bar></menu-bar><div class="rest"><div class="window"><tab-strip></tab-strip><tool-bar></tool-bar><bookmarks-bar></bookmarks-bar><div class="edge"></div><task-page></task-page></div></div><app-dock></app-dock></div><share-bar></share-bar>`);
</script>
</body>
</html>
